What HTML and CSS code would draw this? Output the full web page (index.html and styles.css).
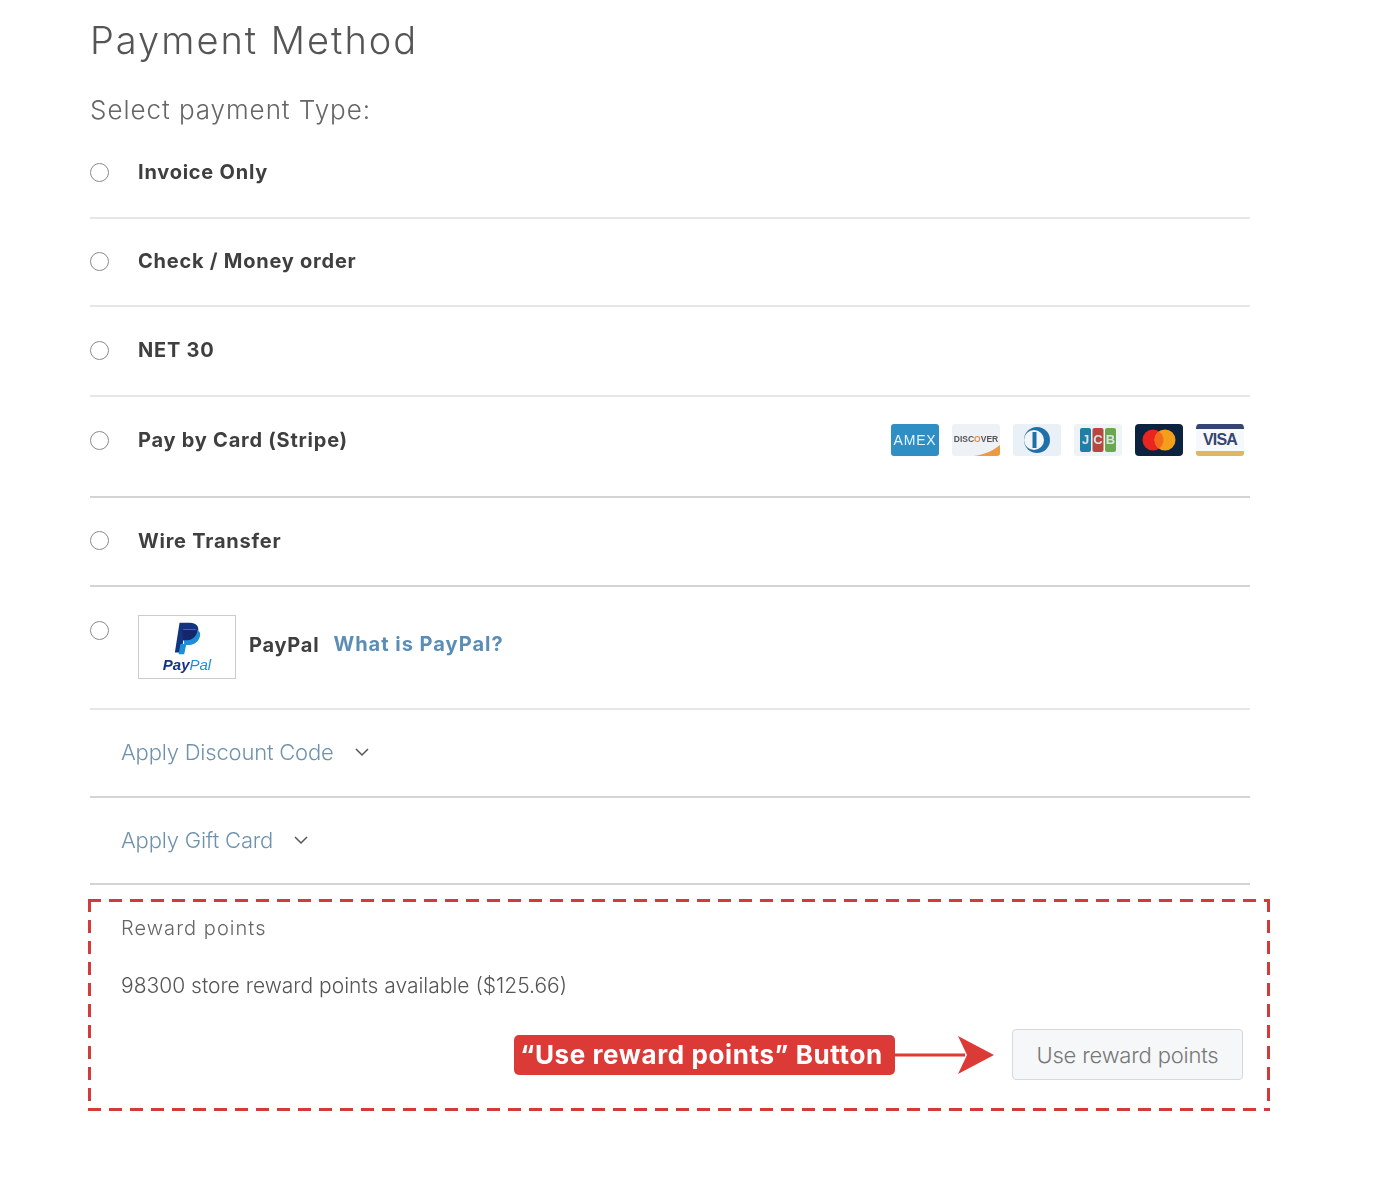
FILE: index.html
```html
<!DOCTYPE html>
<html lang="en">
<head>
<meta charset="utf-8">
<title>Payment Method</title>
<link rel="stylesheet" href="styles.css">
</head>
<body>
<main class="page">
  <h1 class="title">Payment Method</h1>
  <h2 class="subtitle">Select payment Type:</h2>
  <section class="methods">
    <div class="row row-first"><span class="radio"></span><span class="label">Invoice Only</span></div>
    <div class="row row-plain"><span class="radio"></span><span class="label">Check / Money order</span></div>
    <div class="row row-net"><span class="radio"></span><span class="label">NET 30</span></div>
    <div class="row row-cards"><span class="radio"></span><span class="label">Pay by Card (Stripe)</span>
      <div class="cards">
        <svg class="card" viewBox="0 0 48 32"><rect width="48" height="32" rx="3" fill="#2f8fc4"/><text x="24" y="20.500" class="card-amex">AMEX</text></svg>
        <svg class="card" viewBox="0 0 48 32"><rect width="48" height="32" rx="3" fill="#eef2f7"/><path d="M22 32 C34 30 42 26 48 21 V29 Q48 32 45 32Z" fill="#ee9a45"/><text x="24" y="17.500" class="card-disc">DISC<tspan fill="#ee8a2e">O</tspan>VER</text></svg>
        <svg class="card" viewBox="0 0 48 32"><rect width="48" height="32" rx="3" fill="#e9f0f8"/><circle cx="24" cy="16" r="13" fill="#1f6fa8"/><circle cx="21" cy="16" r="10" fill="#f2f6fa"/><rect x="19.500" y="8" width="4" height="16" fill="#1f6fa8"/></svg>
        <svg class="card" viewBox="0 0 48 32"><rect width="48" height="32" rx="3" fill="#eef3f6"/><rect x="6" y="4" width="11" height="24" rx="2" fill="#1f7fa8"/><rect x="18.500" y="4" width="11" height="24" rx="2" fill="#b8483f"/><rect x="31" y="4" width="11" height="24" rx="2" fill="#6aa84f"/><text x="11.500" y="20" class="card-jcb">J</text><text x="24" y="20" class="card-jcb">C</text><text x="36.500" y="20" class="card-jcb">B</text></svg>
        <svg class="card" viewBox="0 0 48 32"><rect width="48" height="32" rx="4" fill="#0c2340"/><circle cx="18" cy="16" r="10.500" fill="#e8261f"/><circle cx="30" cy="16" r="10.500" fill="#f59e1c"/><path d="M24 7.400a10.500 10.500 0 0 1 0 17.200a10.500 10.500 0 0 1 0-17.200Z" fill="#f26a1b"/></svg>
        <svg class="card" viewBox="0 0 48 32"><rect width="48" height="32" fill="#f7f8fb"/><path d="M0 5 Q0 0 3 0 H45 Q48 0 48 5Z" fill="#34466f"/><path d="M0 27 H48 V29 Q48 32 45 32 H3 Q0 32 0 29Z" fill="#e0b565"/><text x="24" y="21" class="card-visa">VISA</text></svg>
      </div>
    </div>
    <div class="row row-wire"><span class="radio"></span><span class="label">Wire Transfer</span></div>
    <div class="row row-paypal"><span class="radio"></span>
      <div class="paypal-logo">
        <svg class="pp-mark" viewBox="0 0 30 36"><path d="M7 1 H18 C25 1 28 5 27 10 C26 17 21 20 15 20 H11 L9 33 H2 Z" fill="#14347f"/><path d="M11 8 H23 C30 9 30 14 28 18 C26 23 21 25 16 25 H14 L12 35 H6 L8 24 H12 Z" fill="#1d8fd6"/><path d="M10 9 H26 C26 15 21 20 15 20 H11 Z" fill="#16266b"/></svg>
        <span class="pp-word"><b>Pay</b><i>Pal</i></span>
      </div>
      <span class="label pp-name">PayPal</span>
      <a class="what" href="#">What is PayPal?</a>
    </div>
    <div class="row row-link"><a class="apply" href="#">Apply Discount Code</a><svg class="chev" viewBox="0 0 16 10"><path d="M2 2 L8 8 L14 2" fill="none" stroke="#555" stroke-width="1.500"/></svg></div>
    <div class="row row-link row-gift"><a class="apply" href="#">Apply Gift Card</a><svg class="chev" viewBox="0 0 16 10"><path d="M2 2 L8 8 L14 2" fill="none" stroke="#555" stroke-width="1.500"/></svg></div>
  </section>
  <section class="rewards">
    <div class="rw-title">Reward points</div>
    <div class="rw-text">98300 store reward points available ($125.66)</div>
    <div class="rw-action">
      <span class="callout">“Use reward points” Button</span>
      <svg class="arrow" viewBox="0 0 99 40"><path d="M0 20 H70" stroke="#dc3a37" stroke-width="3" fill="none"/><path d="M63 1 L99 20 L63 39 L72 20Z" fill="#dc3a37"/></svg>
      <button class="use-btn" type="button">Use reward points</button>
    </div>
  </section>
</main>
</body>
</html>
```
FILE: styles.css
```css
* { box-sizing: border-box; }
body {
  margin: 0;
  background: #fff;
  font-family: "Inter", "Liberation Sans", sans-serif;
  color: #444;
}
.page {
  width: 1160px;
  margin-left: 90px;
  padding-top: 17px;
  filter: blur(0.4px);
}
.title {
  margin: 0;
  font-size: 38px;
  line-height: 46px;
  font-weight: 300;
  color: #555;
  letter-spacing: 2px;
}
.subtitle {
  margin: 31px 0 0;
  font-size: 26px;
  line-height: 32px;
  font-weight: 300;
  color: #666;
  letter-spacing: 0.95px;
}
.methods { margin-top: 5px; }
.row {
  display: flex;
  align-items: center;
  height: 88px;
  border-bottom: 2px solid #e6e6e6;
}
.row.row-first { padding-bottom: 4px; }
.row.row-plain { padding-bottom: 2px; }
.row.row-net { height: 90px; padding-bottom: 2px; }
.row.row-cards { height: 101px; border-bottom-color: #d4d4d4; padding-bottom: 13px; }
.row.row-wire { height: 89px; border-bottom-color: #d4d4d4; padding-bottom: 2px; }
.radio {
  flex: none;
  width: 19px;
  height: 19px;
  border: 1.5px solid #8a8a8a;
  border-radius: 50%;
  margin-right: 29px;
}
.label {
  font-size: 20px;
  font-weight: 700;
  color: #3f3f3f;
  letter-spacing: 0.76px;
}
.cards {
  margin-left: auto;
  margin-right: 6px;
  display: flex;
  gap: 13px;
}
.card { width: 48px; height: 32px; display: block; }
.card text { text-anchor: middle; font-family: "Liberation Sans", sans-serif; }
.card-amex { font-size: 14px; fill: #e8f4fa; letter-spacing: 0.8px; }
.card-disc { font-size: 8.500px; font-weight: 700; fill: #555; }
.card-jcb { font-size: 13px; font-weight: 700; fill: #d8e4e4; }
.card-visa { font-size: 16px; font-weight: 700; fill: #34466f; letter-spacing: -0.8px; }
.row.row-paypal {
  height: 123px;
  align-items: flex-start;
  padding-top: 28px;
}
.row-paypal .radio { margin-top: 6px; }
.paypal-logo {
  flex: none;
  width: 98px;
  height: 64px;
  border: 1px solid #ccc;
  display: flex;
  flex-direction: column;
  align-items: center;
  padding-top: 5px;
}
.pp-mark { width: 28px; height: 35px; display: block; }
.pp-word { font-size: 15px; line-height: 17px; font-style: italic; font-weight: 700; font-family: "Liberation Sans", sans-serif; }
.pp-word b { color: #14347f; }
.pp-word i { color: #1d8fd6; font-weight: 400; }
.pp-name { margin: 18px 0 0 13px; }
.what {
  margin: 17px 0 0 14px;
  font-size: 20px;
  font-weight: 700;
  color: #5b8db5;
  text-decoration: none;
  letter-spacing: 1px;
}
.row-link { height: 88px; padding-left: 31px; padding-bottom: 2px; border-bottom-color: #d4d4d4; }
.row-link.row-gift { height: 87px; }
.apply {
  font-size: 22px;
  font-weight: 300;
  color: #6f93ad;
  text-decoration: none;
  letter-spacing: -0.2px;
}
.chev { width: 16px; height: 10px; margin-left: 20px; }
.rewards {
  width: 1182px;
  height: 212px;
  margin: 14px 0 0 -2px;
  background-image:
    repeating-linear-gradient(90deg, #d33b38 0 13px, transparent 13px 21px),
    repeating-linear-gradient(90deg, #d33b38 0 13px, transparent 13px 21px),
    repeating-linear-gradient(180deg, #d33b38 0 13px, transparent 13px 21px),
    repeating-linear-gradient(180deg, #d33b38 0 13px, transparent 13px 21px);
  background-size: 100% 3px, 100% 3px, 3px 100%, 3px 100%;
  background-position: top left, bottom left, top left, top right;
  background-repeat: no-repeat;
  padding: 16px 27px 0 33px;
}
.rw-title {
  font-size: 20px;
  line-height: 26px;
  font-weight: 300;
  color: #666;
  letter-spacing: 1.05px;
}
.rw-text {
  margin-top: 31px;
  font-size: 21px;
  line-height: 28px;
  font-weight: 300;
  color: #555;
}
.rw-action {
  display: flex;
  justify-content: flex-end;
  align-items: center;
  margin-top: 29px;
}
.callout {
  width: 381px;
  height: 40px;
  padding-right: 6px;
  background: #dc3a37;
  border-radius: 5px;
  color: #fff;
  font-size: 26px;
  font-weight: 700;
  line-height: 40px;
  letter-spacing: 0.6px;
  text-align: center;
  white-space: nowrap;
}
.arrow { flex: none; width: 99px; height: 40px; margin-right: 18px; }
.use-btn {
  flex: none;
  width: 231px;
  height: 51px;
  border: 1.5px solid #d5d9dc;
  border-radius: 4px;
  background: #f5f7f8;
  color: #777;
  font: 300 22px "Inter", "Liberation Sans", sans-serif;
  letter-spacing: -0.2px;
  padding: 0;
}
```
